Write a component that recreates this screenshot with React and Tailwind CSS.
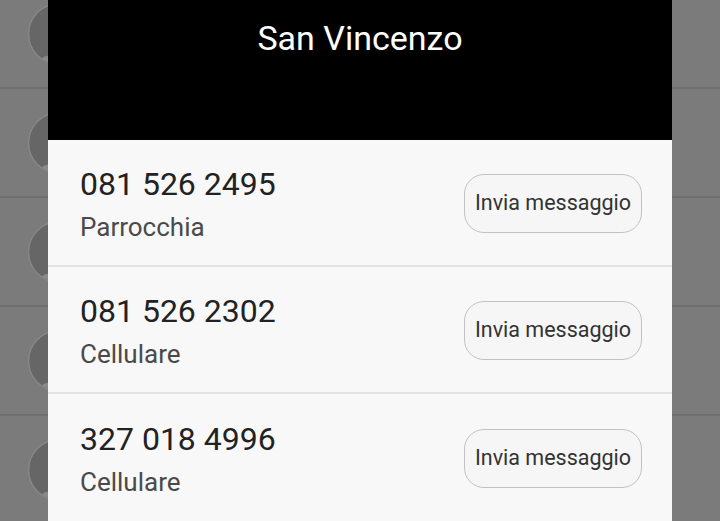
import React from 'react';

const contacts = [
  { number: '081 526 2495', label: 'Parrocchia' },
  { number: '081 526 2302', label: 'Cellulare' },
  { number: '327 018 4996', label: 'Cellulare' },
];

const Avatar = () => (
  <svg width="64" height="64" viewBox="0 0 64 64" className="shrink-0">
    <defs>
      <clipPath id="av">
        <circle cx="32" cy="32" r="30" />
      </clipPath>
    </defs>
    <circle cx="32" cy="32" r="30" fill="#666666" />
    <g clipPath="url(#av)">
      <ellipse cx="32" cy="66" rx="24" ry="14" fill="#8a8a8a" />
    </g>
    <circle cx="32" cy="32" r="30.5" fill="none" stroke="#868686" strokeWidth="1.5" />
  </svg>
);

const BackgroundList = () => (
  <div className="-mt-[20px] flex flex-col">
    {[0, 1, 2, 3, 4].map((i) => (
      <div key={i} className="h-[109px] flex items-center pl-[27px] border-b-2 border-[#6f6f6f]">
        <Avatar />
      </div>
    ))}
  </div>
);

const ContactRow = ({ number, label, last }) => (
  <div className={`h-[128px] flex items-center justify-between pl-[32px] pr-[30px] pt-[2px] ${last ? '' : 'border-b-2 border-[#e3e3e3]'}`}>
    <div className="flex flex-col pt-[1px]">
      <span className="text-[32px] leading-[32px] text-[#222222]">{number}</span>
      <span className="mt-[14px] text-[26px] leading-[26px] text-[#4a4a4a]">{label}</span>
    </div>
    <button className="w-[178px] h-[59px] rounded-[20px] border border-[#c2c2c2] bg-[#f6f6f6] text-[21.5px] text-[#333333]">
      Invia messaggio
    </button>
  </div>
);

export default function App() {
  return (
    <div
      className="relative w-[720px] h-[521px] overflow-hidden bg-[#7b7b7b]"
      style={{ fontFamily: 'Roboto, "Noto Sans", sans-serif' }}
    >
      <BackgroundList />
      <div className="absolute left-[48px] top-0 w-[624px] h-[521px] flex flex-col bg-[#f8f8f8]">
        <div className="h-[140px] shrink-0 bg-black flex justify-center pt-[21px]">
          <span className="text-[34px] leading-[34px] text-white">San Vincenzo</span>
        </div>
        {contacts.map((c, i) => (
          <ContactRow key={i} {...c} last={i === contacts.length - 1} />
        ))}
      </div>
    </div>
  );
}
